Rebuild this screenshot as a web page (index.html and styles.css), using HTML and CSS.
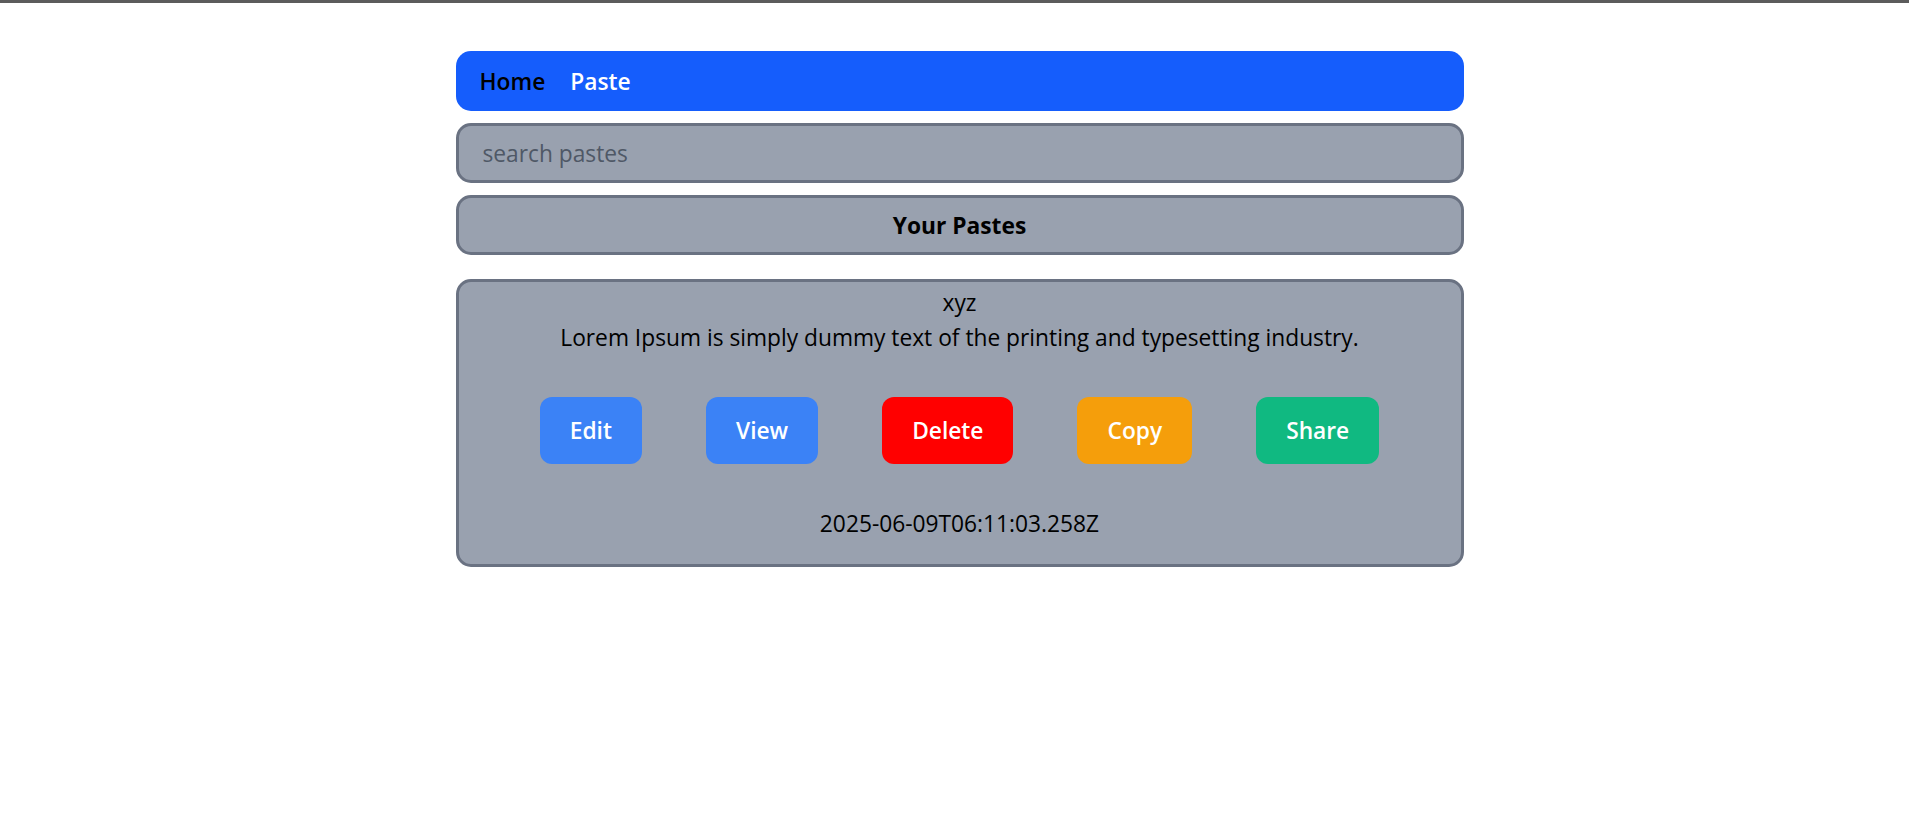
FILE: index.html
```html
<!DOCTYPE html>
<html lang="en">
<head>
<meta charset="utf-8">
<title>Pastes</title>
<link rel="stylesheet" href="styles.css">
</head>
<body>
<div class="topline"></div>
<div class="page">
  <div class="wrap">
    <nav class="nav">
      <a class="nav-link home" href="#">Home</a>
      <a class="nav-link paste" href="#">Paste</a>
    </nav>
    <input class="search" type="text" placeholder="search pastes">
    <div class="heading">Your Pastes</div>
    <div class="card">
      <div class="line title">xyz</div>
      <div class="line content">Lorem Ipsum is simply dummy text of the printing and typesetting industry.</div>
      <div class="actions">
        <button class="btn btn-edit">Edit</button>
        <button class="btn btn-view">View</button>
        <button class="btn btn-delete">Delete</button>
        <button class="btn btn-copy">Copy</button>
        <button class="btn btn-share">Share</button>
      </div>
      <div class="line date">2025-06-09T06:11:03.258Z</div>
    </div>
  </div>
</div>
</body>
</html>
```
FILE: styles.css
```css
* { box-sizing: border-box; }
html, body { margin: 0; padding: 0; background: #ffffff; }
body {
  font-family: "Open Sans", "Noto Sans", "Liberation Sans", sans-serif;
  font-size: 22.75px;
  color: #000;
}
.topline { height: 3px; background: #5c5c5c; }
.page { padding: 48px 0 0 10px; }
.wrap { width: 1008px; margin: 0 auto; }

.nav {
  height: 60px;
  background: #155dfc;
  border-radius: 15px;
  display: flex;
  align-items: center;
  gap: 25px;
  padding: 0 24px;
}
.nav-link { text-decoration: none; font-weight: 600; font-size: 22.75px; }
.home { color: #000; }
.paste { color: #fff; }

.search {
  display: block;
  width: 100%;
  height: 60px;
  margin-top: 12px;
  border: 3px solid #6a7282;
  border-radius: 15px;
  background: #99a1af;
  padding: 0 24px;
  font-family: inherit;
  font-size: 22.75px;
  color: #000;
  outline: none;
}
.search::placeholder { color: #4f5866; }

.heading {
  height: 60px;
  margin-top: 12px;
  border: 3px solid #6a7282;
  border-radius: 15px;
  background: #99a1af;
  display: flex;
  align-items: center;
  justify-content: center;
  font-weight: 700;
}

.card {
  margin-top: 24px;
  border: 3px solid #6a7282;
  border-radius: 15px;
  background: #99a1af;
  padding: 3px 0 23px;
  text-align: center;
}
.line { line-height: 35px; }

.actions {
  display: flex;
  justify-content: center;
  gap: 64px;
  margin: 42px 0 42px;
}
.btn {
  border: none;
  border-radius: 12px;
  height: 67px;
  padding: 0 30px;
  font-family: inherit;
  font-size: 22.75px;
  font-weight: 600;
  color: #fff;
  cursor: pointer;
}
.btn-edit, .btn-view { background: #3b82f6; }
.btn-delete { background: #ff0000; }
.btn-copy { background: #f59e0b; }
.btn-share { background: #10b981; }
```
